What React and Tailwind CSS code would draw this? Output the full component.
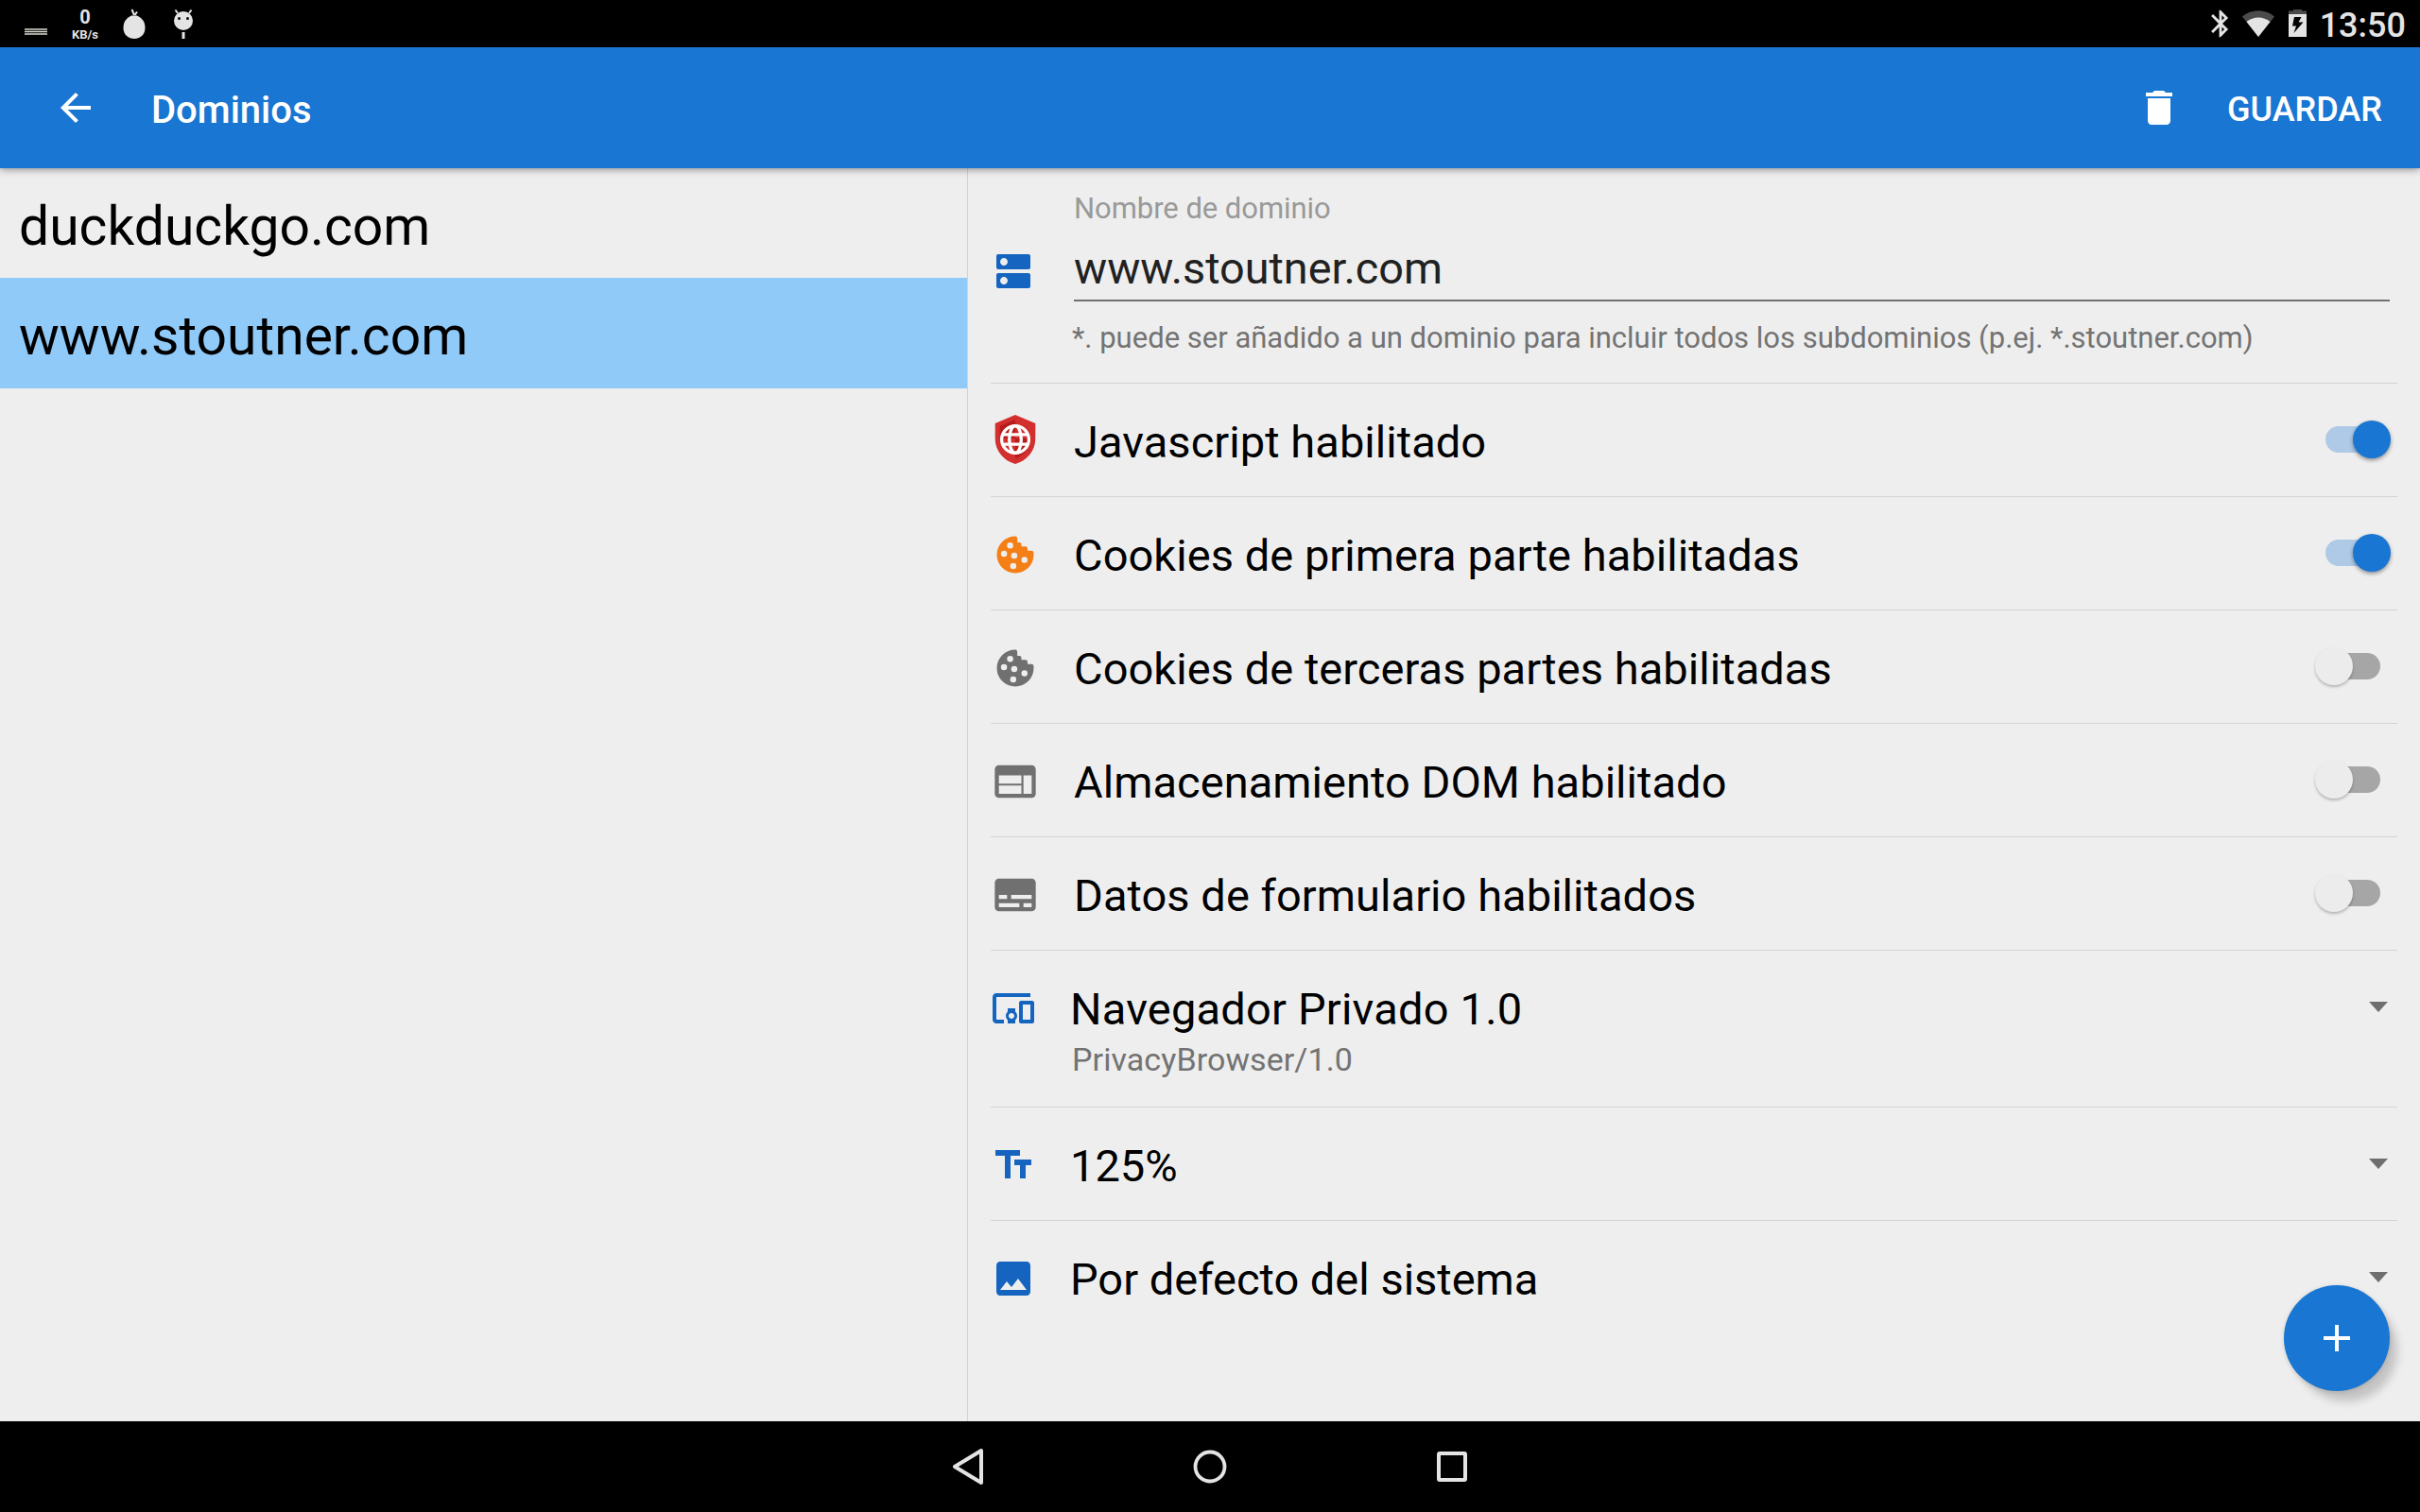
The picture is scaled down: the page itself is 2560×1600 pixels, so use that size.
import React from "react";
import { MdArrowBack, MdDelete, MdDns, MdWeb, MdSubtitles, MdDevicesOther, MdTextFields, MdImage, MdBluetooth } from "react-icons/md";

const COOKIE =
  "M12,3A9,9 0 0,0 3,12A9,9 0 0,0 12,21A9,9 0 0,0 21,12C21,11.5 20.96,11 20.87,10.5C20.6,10 20,10 20,10H18V9C18,8 17,8 17,8H15V7C15,6 14,6 14,6H13V4C13,3 12,3 12,3M9.5,6A1.5,1.5 0 0,1 11,7.5A1.5,1.5 0 0,1 9.5,9A1.5,1.5 0 0,1 8,7.5A1.5,1.5 0 0,1 9.5,6M6.5,10A1.5,1.5 0 0,1 8,11.5A1.5,1.5 0 0,1 6.5,13A1.5,1.5 0 0,1 5,11.5A1.5,1.5 0 0,1 6.5,10M11.5,11A1.5,1.5 0 0,1 13,12.5A1.5,1.5 0 0,1 11.5,14A1.5,1.5 0 0,1 10,12.5A1.5,1.5 0 0,1 11.5,11M16.5,13A1.5,1.5 0 0,1 18,14.5A1.5,1.5 0 0,1 16.5,16A1.5,1.5 0 0,1 15,14.5A1.5,1.5 0 0,1 16.5,13M11,16A1.5,1.5 0 0,1 12.5,17.5A1.5,1.5 0 0,1 11,19A1.5,1.5 0 0,1 9.5,17.5A1.5,1.5 0 0,1 11,16Z";

function Cookie({ className }) {
  return (
    <svg viewBox="0 0 24 24" fill="currentColor" className={className}>
      <path d={COOKIE} />
    </svg>
  );
}

function Shield({ className }) {
  return (
    <svg viewBox="0 0 52 52" className={className}>
      <path d="M26 0 L47.3 9 V25 C47.3 38 38.500 48.500 26 52 C13.500 48.500 4.700 38 4.700 25 V9 Z" fill="#d32f2f" />
      <path d="M26 5 L9.500 12 V25 H26 Z M26 25 H42.500 C41.500 35 35 43 26 46.500 Z" fill="#b71c1c" />
      <g fill="none" stroke="#fff" strokeWidth="3.300">
        <circle cx="26" cy="26" r="14.400" />
        <ellipse cx="26" cy="26" rx="6.300" ry="14.400" />
        <path d="M13 20.800 H39 M13 31.200 H39" />
      </g>
    </svg>
  );
}

function Switch({ on }) {
  return (
    <div className={on ? "relative mr-[18px] h-7 w-[58px] rounded-full bg-[#aecae7]" : "relative mr-[18px] h-7 w-[58px] rounded-full bg-[#a6a6a6]"}>
      <div
        className={
          on
            ? "absolute -top-1.5 left-[29px] size-10 rounded-full bg-[#1976d2] shadow-[0_2px_4px_rgba(0,0,0,0.4)]"
            : "absolute -top-1.5 -left-[11px] size-10 rounded-full bg-[#ececec] shadow-[0_2px_3px_rgba(0,0,0,0.24)]"
        }
      />
    </div>
  );
}

function Caret() {
  return (
    <svg viewBox="0 0 20 11" className="mt-px mr-[10px] h-[11px] w-5">
      <path d="M0 0H20L10 11Z" fill="#6e6e6e" />
    </svg>
  );
}

function SwitchRow({ icon, label, on }) {
  return (
    <div className="flex h-[120px] items-center border-b border-[#d4d4d4] pb-px">
      <div className="flex w-[88px] shrink-0">{icon}</div>
      <div className="mt-[5px] flex-1 text-[47px] leading-[55px] tracking-[0.05px] text-black">{label}</div>
      <Switch on={on} />
    </div>
  );
}

function SpinnerRow({ icon, label, detail, last }) {
  return (
    <div className={last ? "" : "border-b border-[#d4d4d4]"}>
      <div className="flex h-[119px] items-center pb-px">
        <div className="mt-1 flex w-[84px] shrink-0">{icon}</div>
        <div className={detail ? "mt-[5px] flex-1 text-[47px] leading-[55px] tracking-[0.2px] text-black" : "mt-[5px] flex-1 text-[47px] leading-[55px] text-black"}>
          {label}
        </div>
        <Caret />
      </div>
      {detail && <div className="-mt-[27px] h-[73px] pl-[86px] text-[34px] leading-[46px] tracking-[0.08px] text-[#737373]">{detail}</div>}
    </div>
  );
}

function StatusBar() {
  return (
    <div className="flex h-[50px] shrink-0 items-center justify-between bg-black pr-[15px] pl-[26px] text-[#e4e4e4]">
      <div className="flex h-full items-start">
        <svg viewBox="0 0 24 8" className="mt-[30px] h-2 w-6">
          <path d="M0 1H24M0 3.500H24M0 6H24" stroke="#d8d8d0" strokeWidth="1.300" />
        </svg>
        <div className="ml-5 flex w-10 flex-col items-center pt-[8px] font-bold">
          <span className="text-[20px] leading-[20px]">0</span>
          <span className="text-[13px] leading-[18px]">KB/s</span>
        </div>
        <svg viewBox="0 0 24 34" className="mt-2 ml-5 h-[34px] w-6">
          <path d="M9 8.500C6 10 0.500 13 0.500 21.500C0.500 29 6 33 12 33C18 33 23.500 29 23.500 21.500C23.500 13 18 10 15 8.500Z" fill="#e4e4e4" />
          <path d="M12 8L9.500 2M12.500 8L15 4.500" stroke="#e4e4e4" strokeWidth="2" />
        </svg>
        <svg viewBox="0 0 24 34" className="mt-2 ml-[28px] h-[34px] w-6">
          <circle cx="12" cy="14" r="10" fill="#e4e4e4" />
          <path d="M6 6L3.500 2.500M18 6L20.500 2.500" stroke="#e4e4e4" strokeWidth="2" />
          <path d="M12 26V33" stroke="#e4e4e4" strokeWidth="3" />
          <circle cx="7.500" cy="11.500" r="1.500" />
          <circle cx="16.500" cy="11.500" r="1.500" />
        </svg>
      </div>
      <div className="flex items-center">
        <MdBluetooth className="size-[34px]" />
        <svg viewBox="0 0 34 28" className="ml-[6px] h-7 w-[34px]">
          <path d="M0 6.500C10 -2 24 -2 34 6.500L17 28Z" fill="#4b4b4b" />
          <path d="M4.500 12C12 6 22 6 29.500 12L17 28Z" fill="#e4e4e4" />
        </svg>
        <svg viewBox="0 0 20 30" className="ml-[15px] h-[30px] w-5">
          <path d="M0 1.500H5V0H14V1.500H19V6H0Z" fill="#4b4b4b" />
          <path d="M0 5H19V29H0Z" fill="#e4e4e4" />
          <path d="M6 8H13.500L10.500 13.500H15.500L5.500 25L8 17.500H4Z" fill="#000" />
        </svg>
        <span className="ml-[13px] pt-1 text-[36px] leading-[46px] font-medium">13:50</span>
      </div>
    </div>
  );
}

export default function App() {
  return (
    <div className="flex h-[1600px] w-[2560px] flex-col overflow-hidden bg-[#eeeeee] font-['Roboto',sans-serif]">
      <StatusBar />
      <header className="relative z-10 flex h-32 shrink-0 items-center bg-[#1976d2] pl-14 text-white shadow-[0_1px_8px_rgba(0,0,0,0.450)]">
        <MdArrowBack className="size-12" />
        <h1 className="mt-[5px] ml-14 flex-1 text-[40px] leading-[53px] font-medium">Dominios</h1>
        <MdDelete className="size-12" />
        <span className="mt-1 ml-12 w-[204px] text-[36px] leading-[48px] font-medium">GUARDAR</span>
      </header>
      <main className="flex min-h-0 flex-1">
        <aside className="w-[1024px] shrink-0 border-r border-[#d2d2d2] text-[57px] text-black">
          <div className="h-[116px] pt-[7px] pl-5 leading-[109px]">duckduckgo.com</div>
          <div className="h-[117px] bg-[#90caf9] pt-[7px] pl-5 leading-[109px]">www.stoutner.com</div>
        </aside>
        <section className="flex-1 pr-6 pl-6">
          <div className="flex h-[228px] border-b border-[#d4d4d4]">
            <div className="w-[88px] shrink-0 pt-[85px]">
              <MdDns className="size-12 text-[#1565c0]" />
            </div>
            <div className="flex-1 pt-[23px] pr-2">
              <div className="text-[31px] leading-[39px] tracking-[-0.05px] text-[#999999]">Nombre de dominio</div>
              <div className="h-[79px] border-b-2 border-[#6e7071] pt-[17px] text-[46.800px] leading-[54px] text-[#212121]">www.stoutner.com</div>
              <div className="-ml-0.5 pt-[19px] text-[31px] leading-[39px] text-[#737373]">
                *. puede ser añadido a un dominio para incluir todos los subdominios (p.ej. *.stoutner.com)
              </div>
            </div>
          </div>
          <SwitchRow icon={<Shield className="size-[52px]" />} label="Javascript habilitado" on />
          <SwitchRow icon={<Cookie className="mt-1 size-[52px] text-[#f57f17]" />} label="Cookies de primera parte habilitadas" on />
          <SwitchRow icon={<Cookie className="mt-1 size-[52px] text-[#707070]" />} label="Cookies de terceras partes habilitadas" />
          <SwitchRow icon={<MdWeb className="mt-1 size-[52px] text-[#707070]" />} label="Almacenamiento DOM habilitado" />
          <SwitchRow icon={<MdSubtitles className="mt-1 size-[52px] text-[#707070]" />} label="Datos de formulario habilitados" />
          <SpinnerRow icon={<MdDevicesOther className="size-12 text-[#1565c0]" />} label="Navegador Privado 1.0" detail="PrivacyBrowser/1.0" />
          <SpinnerRow icon={<MdTextFields className="size-12 text-[#1565c0]" />} label="125%" />
          <SpinnerRow icon={<MdImage className="size-12 text-[#1565c0]" />} label="Por defecto del sistema" last />
        </section>
      </main>
      <button className="absolute top-[1360px] left-[2416px] flex size-28 items-center justify-center rounded-full bg-[#1976d2] shadow-[10px_13px_10px_-2px_rgba(0,0,0,0.180),0_1px_5px_rgba(0,0,0,0.150)]">
        <svg viewBox="0 0 28 28" className="size-7">
          <path d="M14 0V28M0 14H28" stroke="#fff" strokeWidth="4" />
        </svg>
      </button>
      <nav className="z-10 flex h-24 shrink-0 items-center justify-center gap-[208px] bg-black">
        <svg viewBox="0 0 48 48" className="size-12" fill="none" stroke="#e4e4e4" strokeWidth="4" strokeLinejoin="round">
          <path d="M10 24L38 7V41Z" />
        </svg>
        <svg viewBox="0 0 48 48" className="size-12" fill="none" stroke="#e4e4e4" strokeWidth="3.800">
          <circle cx="24" cy="24" r="15.500" />
        </svg>
        <svg viewBox="0 0 48 48" className="size-12" fill="none" stroke="#e4e4e4" strokeWidth="4" strokeLinejoin="round">
          <rect x="10" y="10" width="28" height="28" rx="1" />
        </svg>
      </nav>
    </div>
  );
}
